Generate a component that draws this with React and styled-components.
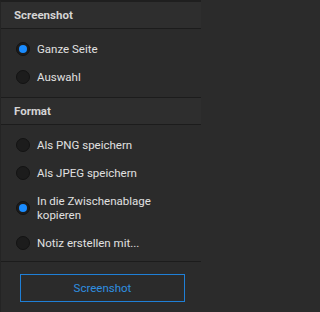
import React, { useState } from "react";
import styled, { createGlobalStyle } from "styled-components";

const GlobalStyle = createGlobalStyle`
  html, body {
    margin: 0;
    padding: 0;
    background: #2b2b2b;
  }
  * {
    box-sizing: border-box;
  }
`;

const screenshotOptions = ["Ganze Seite", "Auswahl"];
const formatOptions = [
  "Als PNG speichern",
  "Als JPEG speichern",
  "In die Zwischenablage kopieren",
  "Notiz erstellen mit...",
];

const RadioRow = ({ label, checked, onSelect }) => (
  <SRow onClick={onSelect}>
    <SRadio $checked={checked} />
    <SLabel>{label}</SLabel>
  </SRow>
);

const App = () => {
  const [mode, setMode] = useState("Ganze Seite");
  const [format, setFormat] = useState("In die Zwischenablage kopieren");

  return (
    <>
      <GlobalStyle />
      <SPanel>
        <SHeader>Screenshot</SHeader>
        <SGroup>
          {screenshotOptions.map((opt) => (
            <RadioRow
              key={opt}
              label={opt}
              checked={mode === opt}
              onSelect={() => setMode(opt)}
            />
          ))}
        </SGroup>
        <SHeader>Format</SHeader>
        <SGroup $last>
          {formatOptions.map((opt) => (
            <RadioRow
              key={opt}
              label={opt}
              checked={format === opt}
              onSelect={() => setFormat(opt)}
            />
          ))}
        </SGroup>
        <SFooter>
          <SButton type="button">Screenshot</SButton>
        </SFooter>
      </SPanel>
    </>
  );
};

export default App;

const SPanel = styled.div`
  display: flex;
  flex-direction: column;
  width: 201px;
  height: 312px;
  background: #2b2b2b;
  border-top: 2px solid #1f1f1f;
  border-left: 1px solid #242424;
  font-family: Roboto, "Noto Sans", sans-serif;
  overflow: hidden;
`;

const SHeader = styled.div`
  display: flex;
  align-items: center;
  height: 27px;
  padding-left: 13px;
  background: #2e2e2e;
  border-bottom: 1px solid #1c1c1c;
  color: #d4d4d4;
  font-size: 11.5px;
  font-weight: 700;
`;

const SGroup = styled.div`
  display: flex;
  flex-direction: column;
  padding: 6px 0 ${(p) => (p.$last ? "4px" : "6px")} 0;
  border-bottom: 1px solid #1c1c1c;
`;

const SRow = styled.div`
  display: flex;
  align-items: center;
  padding: 7px 24px 7px 15px;
  cursor: pointer;
`;

const SRadio = styled.span`
  position: relative;
  flex: none;
  width: 14px;
  height: 14px;
  margin-right: 7px;
  border-radius: 50%;
  background: #1c1c1c;
  border: 1px solid #131313;

  &::after {
    content: "";
    position: absolute;
    left: 2px;
    top: 2px;
    width: 8px;
    height: 8px;
    border-radius: 50%;
    background: #1a8cff;
    display: ${(p) => (p.$checked ? "block" : "none")};
  }
`;

const SLabel = styled.span`
  color: #e0e0e0;
  font-size: 11.5px;
  line-height: 14px;
`;

const SFooter = styled.div`
  display: flex;
  justify-content: center;
  padding: 12px 16px 0 19px;
`;

const SButton = styled.button`
  width: 165px;
  height: 28px;
  background: #2b2b2b;
  border: 1px solid #1f7fd6;
  color: #2f8fe0;
  font-family: Roboto, "Noto Sans", sans-serif;
  font-size: 11.5px;
  cursor: pointer;
`;
